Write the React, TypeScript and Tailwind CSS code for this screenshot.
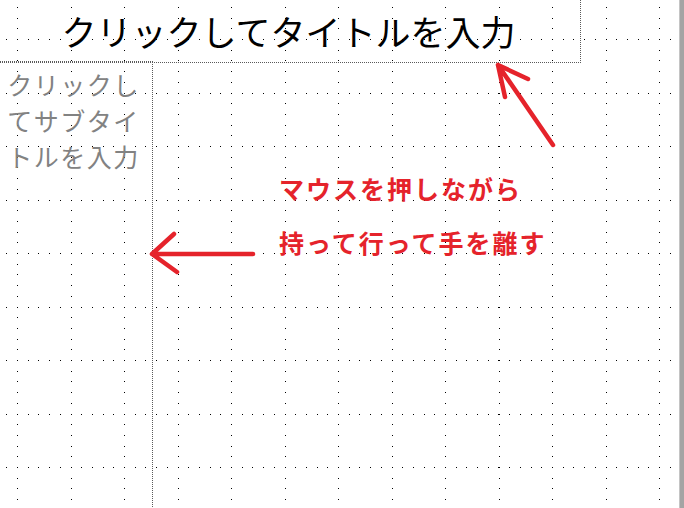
const STEP = 53.5;
const MINOR = STEP / 5;
const X0 = 17;
const Y0 = 39;

// PowerPoint-style grid: dotted guide lines every 53.5px, dots every 10.7px
function gridDots() {
  const seen = new Set<string>();
  const dots: { x: number; y: number }[] = [];
  const add = (x: number, y: number) => {
    const k = `${x},${y}`;
    if (seen.has(k) || x < 0 || y < 0 || x > 676 || y > 508) return;
    seen.add(k);
    dots.push({ x, y });
  };
  for (let c = 0; c < 13; c++) {
    const x = Math.round(X0 + c * STEP);
    for (let j = -4; j < 45; j++) add(x, Math.round(Y0 + j * MINOR));
  }
  for (let r = 0; r < 9; r++) {
    const y = Math.round(Y0 + r * STEP);
    for (let j = -1; j < 63; j++) add(Math.round(X0 + j * MINOR), y);
  }
  return dots;
}

const dots = gridDots();

const subtitleLines = ["クリックし", "てサブタイ", "トルを入力"];
const noteLines = ["マウスを押しながら", "持って行って手を離す"];

export default function App() {
  return (
    <div className="flex h-[508px] w-full overflow-hidden bg-white font-['Noto_Sans_CJK_JP','Noto_Sans_CJK_SC',sans-serif]">
      <div className="relative flex-1 overflow-hidden">
        <svg
          className="absolute inset-0 h-full w-full"
          shapeRendering="crispEdges"
          aria-hidden="true"
        >
          {dots.map((d) => (
            <rect key={`${d.x}-${d.y}`} x={d.x} y={d.y} width={1} height={1} fill="#000" />
          ))}
        </svg>

        {/* title placeholder */}
        <div className="absolute left-[-4px] top-[-4px] flex h-[67px] w-[585px] items-center justify-center border border-dotted border-[#5a5a5a] pt-[2px]">
          <span className="text-[35px] leading-none text-black">
            クリックしてタイトルを入力
          </span>
        </div>

        {/* subtitle placeholder */}
        <div className="absolute left-[-6px] top-[61px] h-[470px] w-[159px] border border-dotted border-[#5a5a5a] pt-[4px]">
          <div className="flex flex-col items-center text-[25px] leading-[36px] tracking-[1.5px] text-[#828282]">
            {subtitleLines.map((line) => (
              <span key={line}>{line}</span>
            ))}
          </div>
        </div>

        <div className="absolute left-[279px] top-[162px] flex flex-col text-[25px] font-bold leading-[53.5px] tracking-[2px] text-[#e5232b]">
          {noteLines.map((line) => (
            <span key={line}>{line}</span>
          ))}
        </div>

        <svg className="absolute inset-0 h-full w-full" aria-hidden="true">
          <g
            fill="none"
            stroke="#e5232b"
            strokeWidth={4.5}
            strokeLinecap="round"
            strokeLinejoin="round"
          >
            <path d="M253 254 L152 254 M174 234 L152 254 L177 272" />
            <path d="M553 145 L498 65 M528 79 L498 65 L505 97" />
          </g>
        </svg>
      </div>
      <div className="w-[5px] shrink-0 border-l border-[#c4c4c4] bg-[#a4a4a4]" />
    </div>
  );
}
